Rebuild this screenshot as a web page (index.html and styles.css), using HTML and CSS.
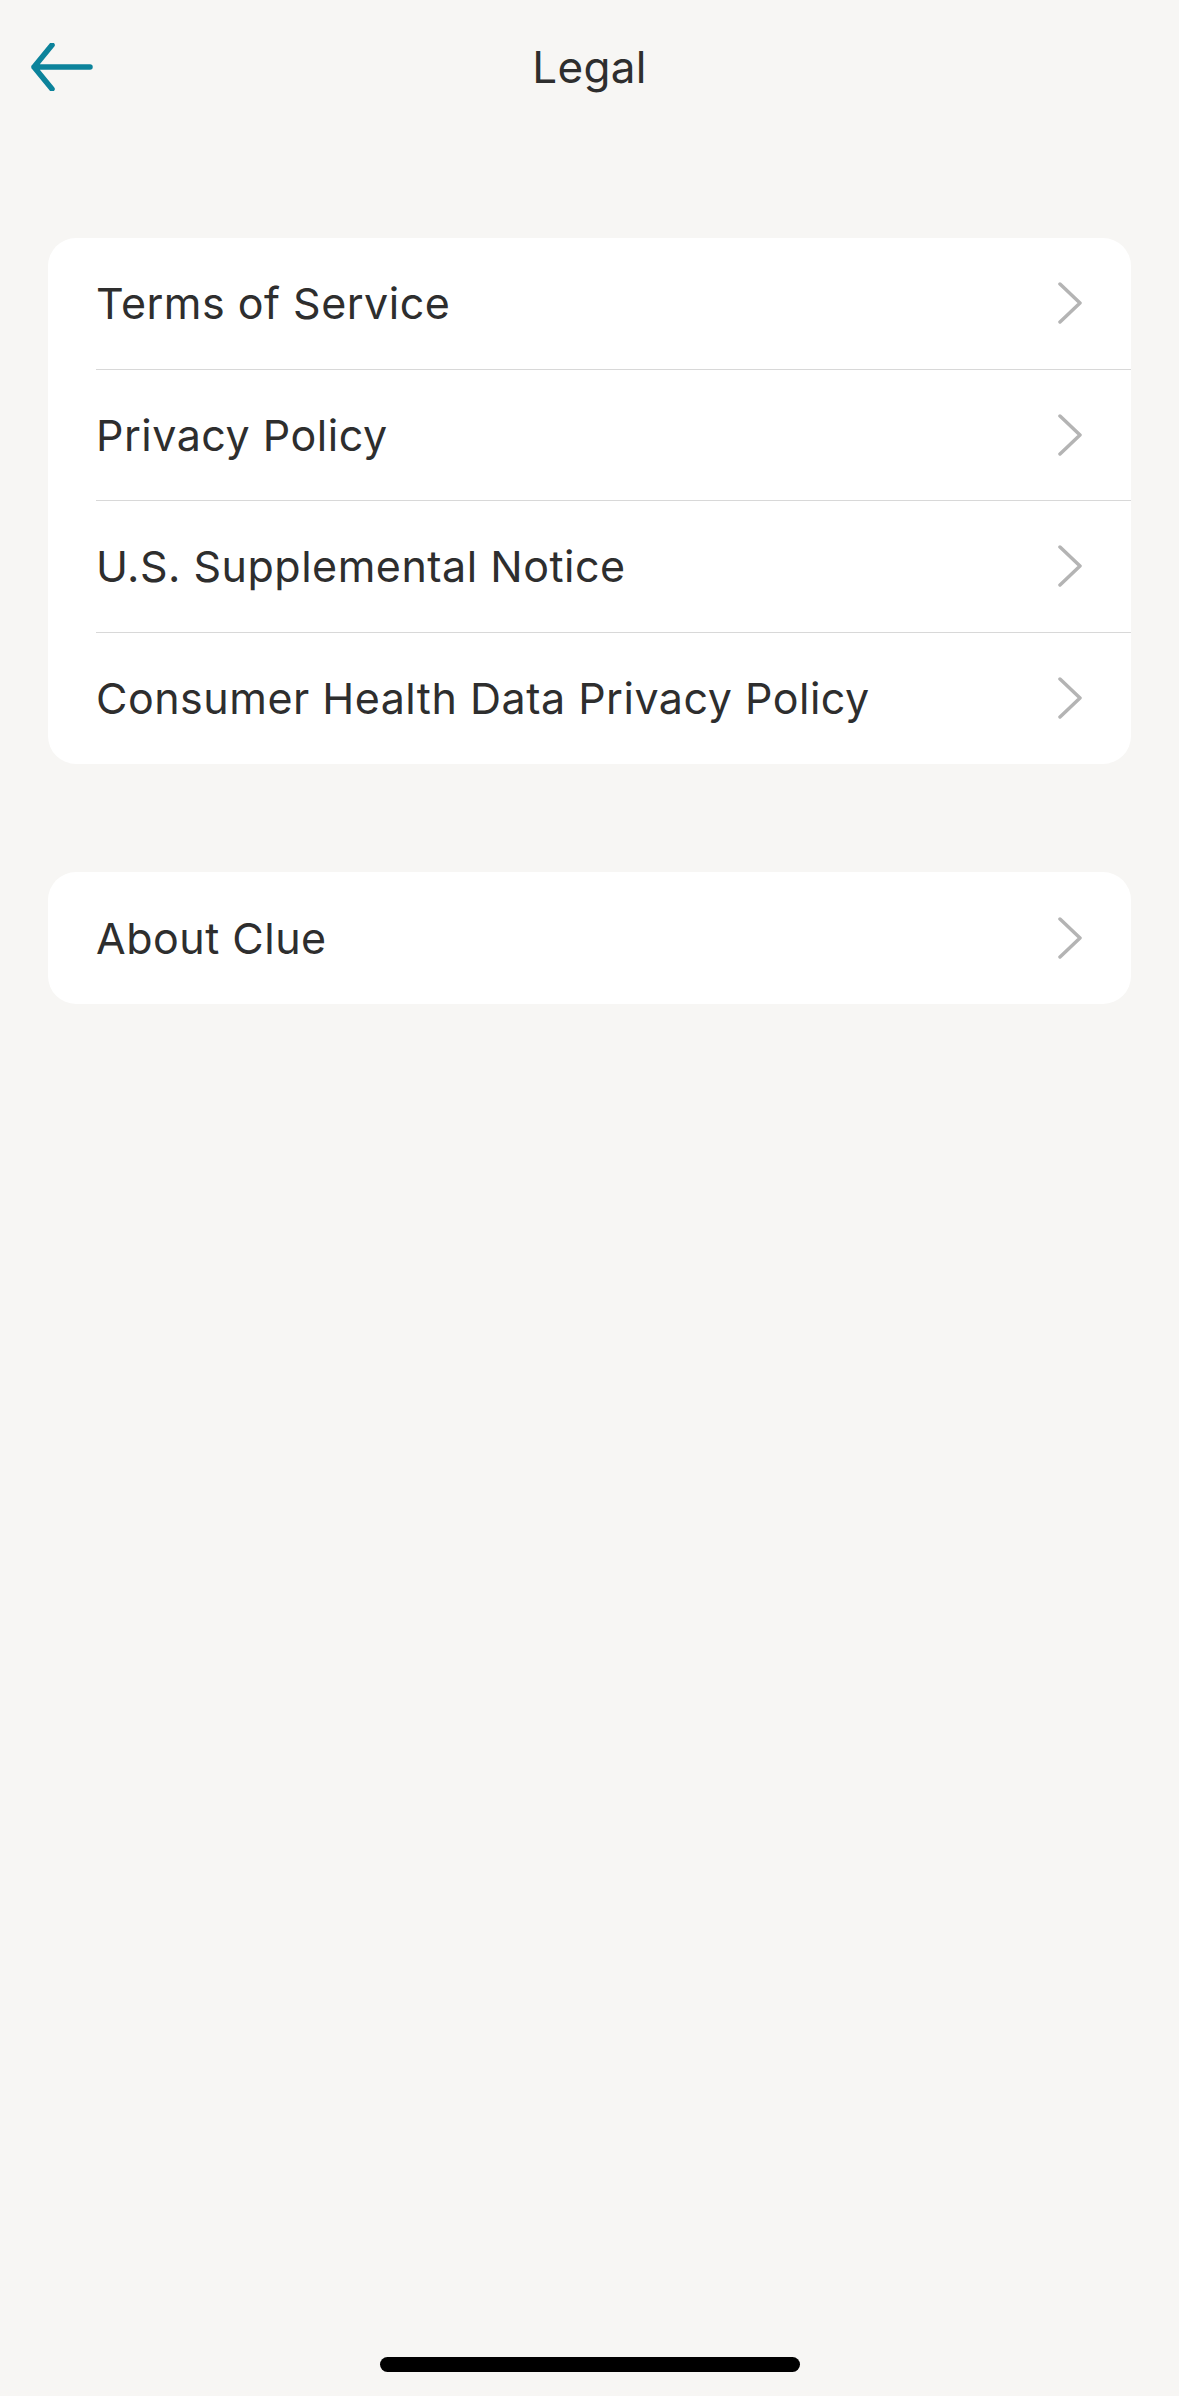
FILE: index.html
```html
<!DOCTYPE html>
<html lang="en">
<head>
<meta charset="utf-8">
<title>Legal</title>
<link rel="stylesheet" href="styles.css">
</head>
<body>
<div class="screen">
  <header class="header">
    <button class="back" aria-label="Back">
      <svg width="66" height="48" viewBox="0 0 66 48"><path d="M62 24H6M24 2L6 24L24 46" fill="none" stroke="#0c839b" stroke-width="5.5" stroke-linecap="round" stroke-linejoin="round"/></svg>
    </button>
    <h1 class="title">Legal</h1>
  </header>

  <section class="card">
    <div class="row"><span class="label">Terms of Service</span><svg class="chev" width="26" height="42" viewBox="0 0 26 42"><path d="M3 2L23 21L3 40" fill="none" stroke="#b4b4b4" stroke-width="3.5" stroke-linecap="round" stroke-linejoin="round"/></svg></div>
    <div class="row"><span class="label">Privacy Policy</span><svg class="chev" width="26" height="42" viewBox="0 0 26 42"><path d="M3 2L23 21L3 40" fill="none" stroke="#b4b4b4" stroke-width="3.5" stroke-linecap="round" stroke-linejoin="round"/></svg></div>
    <div class="row"><span class="label">U.S. Supplemental Notice</span><svg class="chev" width="26" height="42" viewBox="0 0 26 42"><path d="M3 2L23 21L3 40" fill="none" stroke="#b4b4b4" stroke-width="3.5" stroke-linecap="round" stroke-linejoin="round"/></svg></div>
    <div class="row"><span class="label">Consumer Health Data Privacy Policy</span><svg class="chev" width="26" height="42" viewBox="0 0 26 42"><path d="M3 2L23 21L3 40" fill="none" stroke="#b4b4b4" stroke-width="3.5" stroke-linecap="round" stroke-linejoin="round"/></svg></div>
  </section>

  <section class="card card-second">
    <div class="row"><span class="label">About Clue</span><svg class="chev" width="26" height="42" viewBox="0 0 26 42"><path d="M3 2L23 21L3 40" fill="none" stroke="#b4b4b4" stroke-width="3.5" stroke-linecap="round" stroke-linejoin="round"/></svg></div>
  </section>

  <div class="spacer"></div>
  <div class="home-bar"></div>
</div>
</body>
</html>
```
FILE: styles.css
```css
* { box-sizing: border-box; }
html, body {
  margin: 0;
  padding: 0;
  background: #f7f6f4;
}
body {
  font-family: Inter, "Noto Sans", "Liberation Sans", sans-serif;
  color: #2e2e2e;
}
.screen {
  width: 1179px;
  height: 2396px;
  display: flex;
  flex-direction: column;
}
.header {
  height: 134px;
  display: flex;
  align-items: center;
  justify-content: center;
  position: relative;
}
.back {
  position: absolute;
  left: 28px;
  top: 43px;
  padding: 0;
  border: 0;
  background: none;
  display: flex;
}
.title {
  margin: 0;
  font-size: 44px;
  font-weight: 400;
  letter-spacing: 0.3px;
}
.card {
  margin: 104px 48px 0 48px;
  background: #ffffff;
  border-radius: 28px;
  overflow: hidden;
}
.card-second {
  margin-top: 108px;
}
.row {
  height: 131.5px;
  margin-left: 48px;
  padding-right: 48px;
  display: flex;
  align-items: center;
  justify-content: space-between;
  border-bottom: 1.5px solid #d8d8d8;
}
.row:last-child {
  border-bottom: none;
}
.label {
  font-size: 43px;
  letter-spacing: 0.5px;
}
.chev { flex: none; }
.spacer { flex: 1; }
.home-bar {
  align-self: center;
  width: 420px;
  height: 15px;
  border-radius: 8px;
  background: #000;
  margin-bottom: 24px;
}
```
